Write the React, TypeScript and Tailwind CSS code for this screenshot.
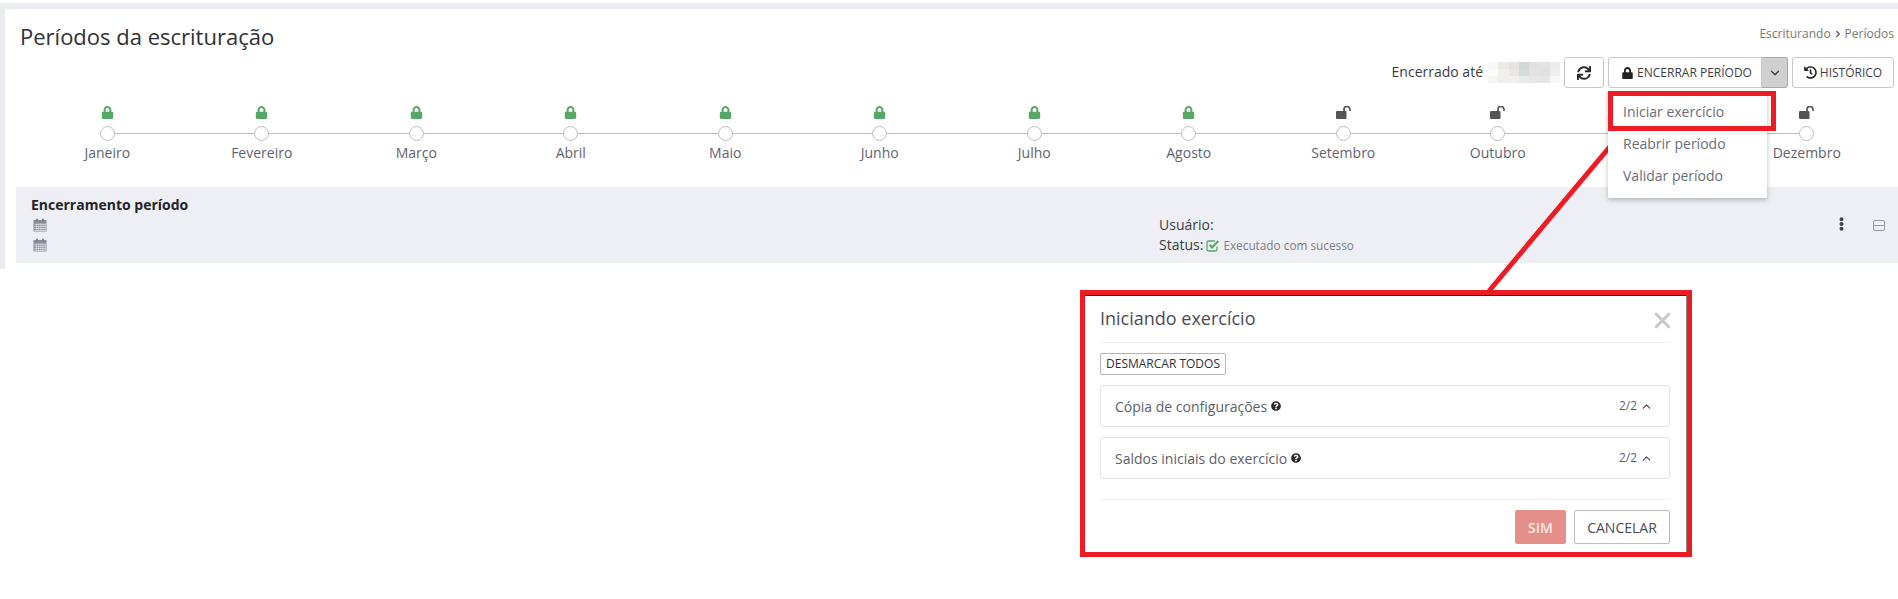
import { ChevronDown, ChevronRight, ChevronUp, X } from "lucide-react"
import { FaEllipsisV, FaHistory, FaLock, FaQuestionCircle, FaSync } from "react-icons/fa"

const months = [
  "Janeiro",
  "Fevereiro",
  "Março",
  "Abril",
  "Maio",
  "Junho",
  "Julho",
  "Agosto",
  "Setembro",
  "Outubro",
  "Novembro",
  "Dezembro",
]

const blurRows = [
  ["bg-[#f8f8f8]", "bg-[#ebeae6]", "bg-[#e4e3dd]", "bg-[#d3d7d8]", "bg-[#dfe0df]", "bg-[#e2e2e1]", "bg-[#ececec]"],
  ["bg-[#fbfbfb]", "bg-[#f0efec]", "bg-[#e7e7e3]", "bg-[#d7dadb]", "bg-[#e1e2e1]", "bg-[#e0e0e0]", "bg-[#eeeeee]"],
  ["bg-[#f4f4f4]", "bg-[#efefef]", "bg-[#f0f0f0]", "bg-[#eaeaea]", "bg-[#e7e7e7]", "bg-[#e6e6e6]", "bg-[#f7f7f7]"],
]

function CalendarIcon() {
  return (
    <svg width="14" height="14" viewBox="0 0 14 14" className="block">
      <rect x="0.5" y="2" width="13" height="11.5" fill="#8b8d97" />
      <rect x="3" y="0.5" width="2" height="3" rx="1" fill="#777983" />
      <rect x="9" y="0.5" width="2" height="3" rx="1" fill="#777983" />
      <path d="M1.3 6.3h11.4M1.3 8.4h11.4M1.3 10.5h11.4M1.3 12.6h11.4M3.4 5.5v7.5M5.6 5.5v7.5M7.8 5.5v7.5M10 5.5v7.5M12.2 5.5v7.5" stroke="#e3e5eb" strokeWidth="0.7" />
    </svg>
  )
}

function OpenLockIcon() {
  return (
    <svg width="15" height="13" viewBox="0 0 15 13" className="block">
      <rect x="0" y="5" width="10.5" height="8" rx="1" fill="#555555" />
      <path d="M8 5.5V3.4a3 3 0 0 1 6 0V5" fill="none" stroke="#555555" strokeWidth="1.7" />
    </svg>
  )
}

function CheckedIcon() {
  return (
    <svg width="14" height="13" viewBox="0 0 14 13" className="block">
      <path d="M11 7.500v3a1.500 1.500 0 0 1-1.500 1.500h-7A1.500 1.500 0 0 1 1 10.500v-7A1.500 1.500 0 0 1 2.500 2H9" fill="none" stroke="#57a868" strokeWidth="1.300" />
      <path d="M3.500 5.800l2.600 2.600 6.200-6.400" fill="none" stroke="#57a868" strokeWidth="2.200" />
    </svg>
  )
}

function Month({ name, index }: { name: string; index: number }) {
  const closed = index < 8
  // novembro fica atras do menu aberto
  const hidden = index === 10
  return (
    <div className="flex flex-col items-center">
      <div className="flex h-[13px] items-center">
        {closed ? <FaLock className="h-[13px] w-[13px] text-[#57a868]" /> : <OpenLockIcon />}
      </div>
      <div className="relative mt-[7px] flex w-full justify-center">
        {index < 11 && <div className="absolute left-1/2 top-[7px] h-[1px] w-full bg-[#bdbdbd]" />}
        <div className="relative h-[15px] w-[15px] rounded-full border border-[#bdbdbd] bg-white" />
      </div>
      <div className={`mt-[2px] text-[14px] leading-[20px] text-[#5f6270] ${hidden ? "invisible" : ""}`}>{name}</div>
    </div>
  )
}

function SectionCard({ title }: { title: string }) {
  return (
    <div className="flex h-[42px] items-center rounded-[3px] border border-[#e4e5e8] pl-[14px] pr-[13px]">
      <span className="text-[14px] text-[#5c5f6b]">{title}</span>
      <FaQuestionCircle className="ml-[4px] h-[10px] w-[10px] text-[#2b2b2b]" />
      <span className="ml-auto text-[12px] text-[#5c5f6b]">2/2</span>
      <ChevronUp className="ml-[3px] mr-[3px] h-[13px] w-[13px] text-[#444444]" />
    </div>
  )
}

export default function App() {
  return (
    <div className="relative h-[599px] w-full overflow-hidden bg-white font-['Open_Sans',sans-serif]">
      <div className="mt-[3px] h-[6px] bg-[#e9ebef]" />
      <div className="flex h-[260px] border-l-[5px] border-[#e9ebef]">
        <div className="flex min-w-0 flex-1 flex-col">
          {/* Title row */}
          <div className="flex h-[48px] justify-between pl-[15px] pr-[4px]">
            <h1 className="pt-[12px] text-[22px] leading-[30px] text-[#2f3136]">Períodos da escrituração</h1>
            <div className="flex items-start gap-[2px] pt-[16px] text-[12px] leading-[18px] text-[#7b7772]">
              Escriturando
              <ChevronRight className="mt-[4px] h-[10px] w-[10px] text-[#555555]" strokeWidth={3} />
              Períodos
            </div>
          </div>

          {/* Toolbar */}
          <div className="flex h-[31px] items-center justify-end pr-[4px]">
            <span className="pb-[3px] pr-[1px] text-[14px] text-[#3b3d45]">Encerrado até</span>
            <div className="ml-[4px] mb-[1px] flex h-[21px] w-[72px] flex-col">
              {blurRows.map((row, i) => (
                <div key={i} className="flex flex-1">
                  {row.map((c, j) => (
                    <div key={j} className={`flex-1 ${c}`} />
                  ))}
                </div>
              ))}
            </div>
            <button className="ml-[4px] flex h-[31px] w-[40px] items-center justify-center rounded-[3px] border border-[#c8c8c8] bg-white">
              <FaSync className="h-[14px] w-[14px] text-[#2b2b2b]" />
            </button>
            <div className="relative ml-[4px] flex h-[31px] w-[180px]">
              <button className="flex flex-1 items-center justify-center gap-[4px] rounded-l-[3px] border border-[#c8c8c8] bg-white pl-[4px] text-[12px] text-[#3b3d45]">
                <FaLock className="h-[12px] w-[11px] text-[#222222]" />
                ENCERRAR PERÍODO
              </button>
              <button className="flex w-[26px] items-center justify-center rounded-r-[3px] border border-l-0 border-[#a9a9a9] bg-[#d0d0d0]">
                <ChevronDown className="h-[14px] w-[14px] text-[#333333]" />
              </button>

              {/* Dropdown menu */}
              <div className="absolute left-0 top-[34px] z-10 w-[159px] bg-white pb-[7px] pt-[4px] text-[14px] text-[#6a6d7a] shadow-[0_2px_5px_rgba(0,0,0,0.25)]">
                <div className="flex h-[32px] items-center pl-[15px]">Iniciar exercício</div>
                <div className="flex h-[32px] items-center pl-[15px]">Reabrir período</div>
                <div className="flex h-[32px] items-center pl-[15px]">Validar período</div>
                <div className="absolute left-0 top-0 h-[40px] w-[168px] border-[5px] border-[#ed1c24]" />
              </div>
            </div>
            <button className="ml-[4px] flex h-[31px] w-[102px] items-center justify-center gap-[3px] rounded-[3px] border border-[#c8c8c8] bg-white text-[12px] text-[#3b3d45]">
              <FaHistory className="h-[13px] w-[13px] text-[#222222]" />
              HISTÓRICO
            </button>
          </div>

          {/* Timeline */}
          <div className="mt-[18px] grid grid-cols-12 pl-[25px] pr-[14px]">
            {months.map((m, i) => (
              <Month key={m} name={m} index={i} />
            ))}
          </div>

          {/* Closing log */}
          <div className="mt-[24px] ml-[11px] flex h-[76px] bg-[#eeeff4] pl-[15px] pt-[8px] text-[14px] leading-[20px]">
            <div className="w-[1128px]">
              <div className="font-bold text-[#22242a]">Encerramento período</div>
              <div className="flex h-[20px] items-center pl-[2px]">
                <CalendarIcon />
              </div>
              <div className="flex h-[20px] items-center pl-[2px]">
                <CalendarIcon />
              </div>
            </div>
            <div className="pt-[20px] text-[#3b3d45]">
              <div>Usuário:</div>
              <div className="flex items-center">
                Status:
                <span className="ml-[3px]">
                  <CheckedIcon />
                </span>
                <span className="ml-[3px] text-[11.8px] text-[#7d7d7d]">Executado com sucesso</span>
              </div>
            </div>
            <div className="ml-auto flex items-start pr-[13px] pt-[22px]">
              <FaEllipsisV className="h-[14px] w-[13px] text-[#444444]" />
              <div className="ml-[25px] mt-[3px] flex h-[11px] w-[12px] items-center rounded-[2px] border border-[#999999]">
                <div className="h-[1px] w-full bg-[#999999]" />
              </div>
            </div>
          </div>
        </div>
      </div>

      {/* Modal shown below the page */}
      <div className="absolute left-[1080px] top-[290px] flex h-[267px] w-[612px] flex-col border-[5px] border-[#ed1c24] bg-white">
        <div className="flex h-[47px] flex-none items-center justify-between border-t border-r border-t-[#222222] border-r-[#8a8a8a] pl-[15px] pr-[16px]">
          <span className="pb-[2px] text-[18px] text-[#4a4c55]">Iniciando exercício</span>
          <X className="-mr-[5px] mt-[2px] h-[25px] w-[25px] text-[#c8c8c8]" strokeWidth={3} />
        </div>
        <div className="flex flex-1 flex-col border-r border-[#8a8a8a] pl-[15px] pr-[16px]">
          <div className="border-t border-[#f0f0f0] pt-[10px]">
            <button className="flex h-[22px] w-[126px] items-center justify-center rounded-[2px] border border-[#b5b5b5] bg-white text-[12px] text-[#2f3136]">
              DESMARCAR TODOS
            </button>
          </div>
          <div className="mt-[10px] flex flex-col gap-[10px]">
            <SectionCard title="Cópia de configurações" />
            <SectionCard title="Saldos iniciais do exercício" />
          </div>
          <div className="mt-[20px] flex flex-1 items-start justify-end gap-[8px] border-t border-[#f0f0f0] pt-[10px]">
            <button className="h-[34px] w-[51px] rounded-[2px] bg-[#e58f8a] text-[14px] font-semibold text-[#fbeaea]">SIM</button>
            <button className="h-[34px] w-[96px] rounded-[2px] border border-[#bdbdbd] bg-white text-[14px] text-[#4a4c55]">CANCELAR</button>
          </div>
        </div>
      </div>

      {/* Red annotation line */}
      <svg className="pointer-events-none absolute inset-0 h-full w-full">
        <line x1="1623" y1="131" x2="1489" y2="291" stroke="#ed1c24" strokeWidth="5" />
      </svg>
    </div>
  )
}
